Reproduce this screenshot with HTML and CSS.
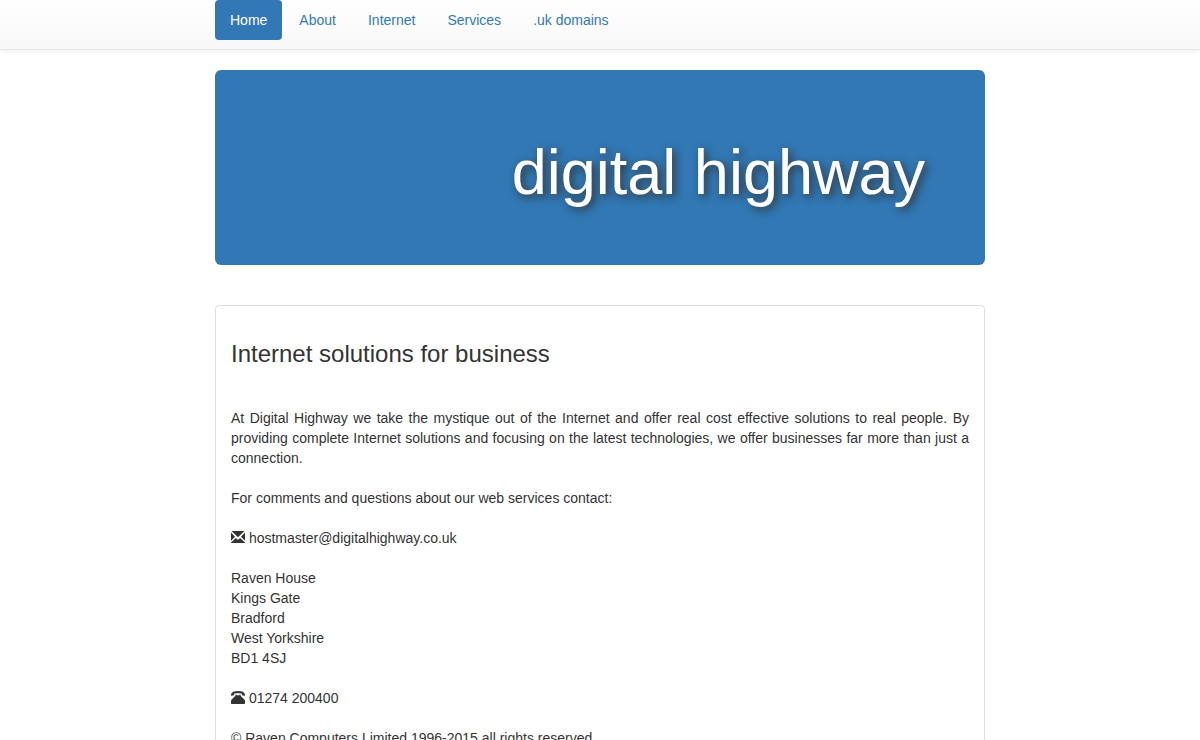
FILE: index.html
```html
<!DOCTYPE html>
<html lang="en">
<head>
<meta charset="utf-8">
<meta name="viewport" content="width=device-width, initial-scale=1">
<title>Digital Highway</title>
<link rel="stylesheet" href="styles.css">
</head>
<body>
<header class="topbar">
  <nav class="container nav">
    <a class="nav-link active" href="#home">Home</a>
    <a class="nav-link" href="#about">About</a>
    <a class="nav-link" href="#internet">Internet</a>
    <a class="nav-link" href="#services">Services</a>
    <a class="nav-link" href="#domains">.uk domains</a>
  </nav>
</header>
<main class="container">
  <div class="banner"><h1 class="banner-title">digital highway</h1></div>
  <section class="panel">
    <h2 class="panel-title">Internet solutions for business</h2>
    <p class="text justified">At Digital Highway we take the mystique out of the Internet and offer real cost effective solutions to real people. By providing complete Internet solutions and focusing on the latest technologies, we offer businesses far more than just a connection.</p>
    <p class="text">For comments and questions about our web services contact:</p>
    <p class="text"><svg class="icon" viewBox="0 0 14 14" aria-hidden="true"><path d="M.5 0h13L7 6.300zM0 1.500 4 5.700 0 9.700zM14 1.500 10 5.700 14 9.700zM4.900 7.100 7 9.100l2.100-2L14 11.600V12H0v-.4z"/></svg> hostmaster@digitalhighway.co.uk</p>
    <address class="text">Raven House<br>Kings Gate<br>Bradford<br>West Yorkshire<br>BD1 4SJ</address>
    <p class="text"><svg class="icon" viewBox="0 0 14 14" aria-hidden="true"><path d="M0 3.500C.5 1 3 0 7 0s6.500 1 7 3.500v1.300l-3-.5V2.700C8.500 2.200 5.500 2.200 3 2.700v1.600l-3 .5z"/><path d="M4.500 3.500h1v.7h3v-.7h1v1.300L13.300 8.400q.7.700.7 1.600V12q0 1-.7 1H.7Q0 13 0 12v-2Q0 9.100.7 8.400l3.800-3.600z"/></svg> 01274 200400</p>
    <p class="text">© Raven Computers Limited 1996-2015 all rights reserved</p>
  </section>
</main>
</body>
</html>
```
FILE: styles.css
```css
* { box-sizing: border-box; }
body {
  margin: 0;
  overflow-x: hidden;
  background: #fff;
  color: #333;
  font: 14px/20px "Liberation Sans", Arial, sans-serif;
}
.container { width: 100%; max-width: 770px; margin: 0 auto; }
.topbar {
  min-height: 50px;
  margin-bottom: 20px;
  border-bottom: 1px solid #e7e7e7;
  background: linear-gradient(#fff, #f8f8f8);
  box-shadow: 0 1px 5px rgba(0, 0, 0, .075);
}
.nav { display: flex; flex-wrap: wrap; gap: 2px; }
.nav-link { padding: 10px 15px; border-radius: 4px; color: #337ab7; text-decoration: none; }
.nav-link.active { background: #3178b5; color: #fff; }
.banner { padding: 48px 60px; margin-bottom: 40px; border-radius: 6px; background: #3178b5; }
.banner-title {
  margin: 20px 0 10px;
  color: #fff;
  font-size: 63px;
  font-weight: 400;
  line-height: 69px;
  text-align: right;
  text-shadow: 3px 3px 8px #333;
}
.panel { padding: 15px; border: 1px solid #ddd; border-radius: 4px; box-shadow: 0 1px 2px rgba(0, 0, 0, .05); }
.panel-title { margin: 20px 0 41px; font-size: 24px; font-weight: 400; line-height: 26px; }
.text { margin: 0 0 20px; font-style: normal; }
.justified { text-align: justify; }
.icon { width: 14px; height: 14px; vertical-align: -2px; fill: #333; }
```
